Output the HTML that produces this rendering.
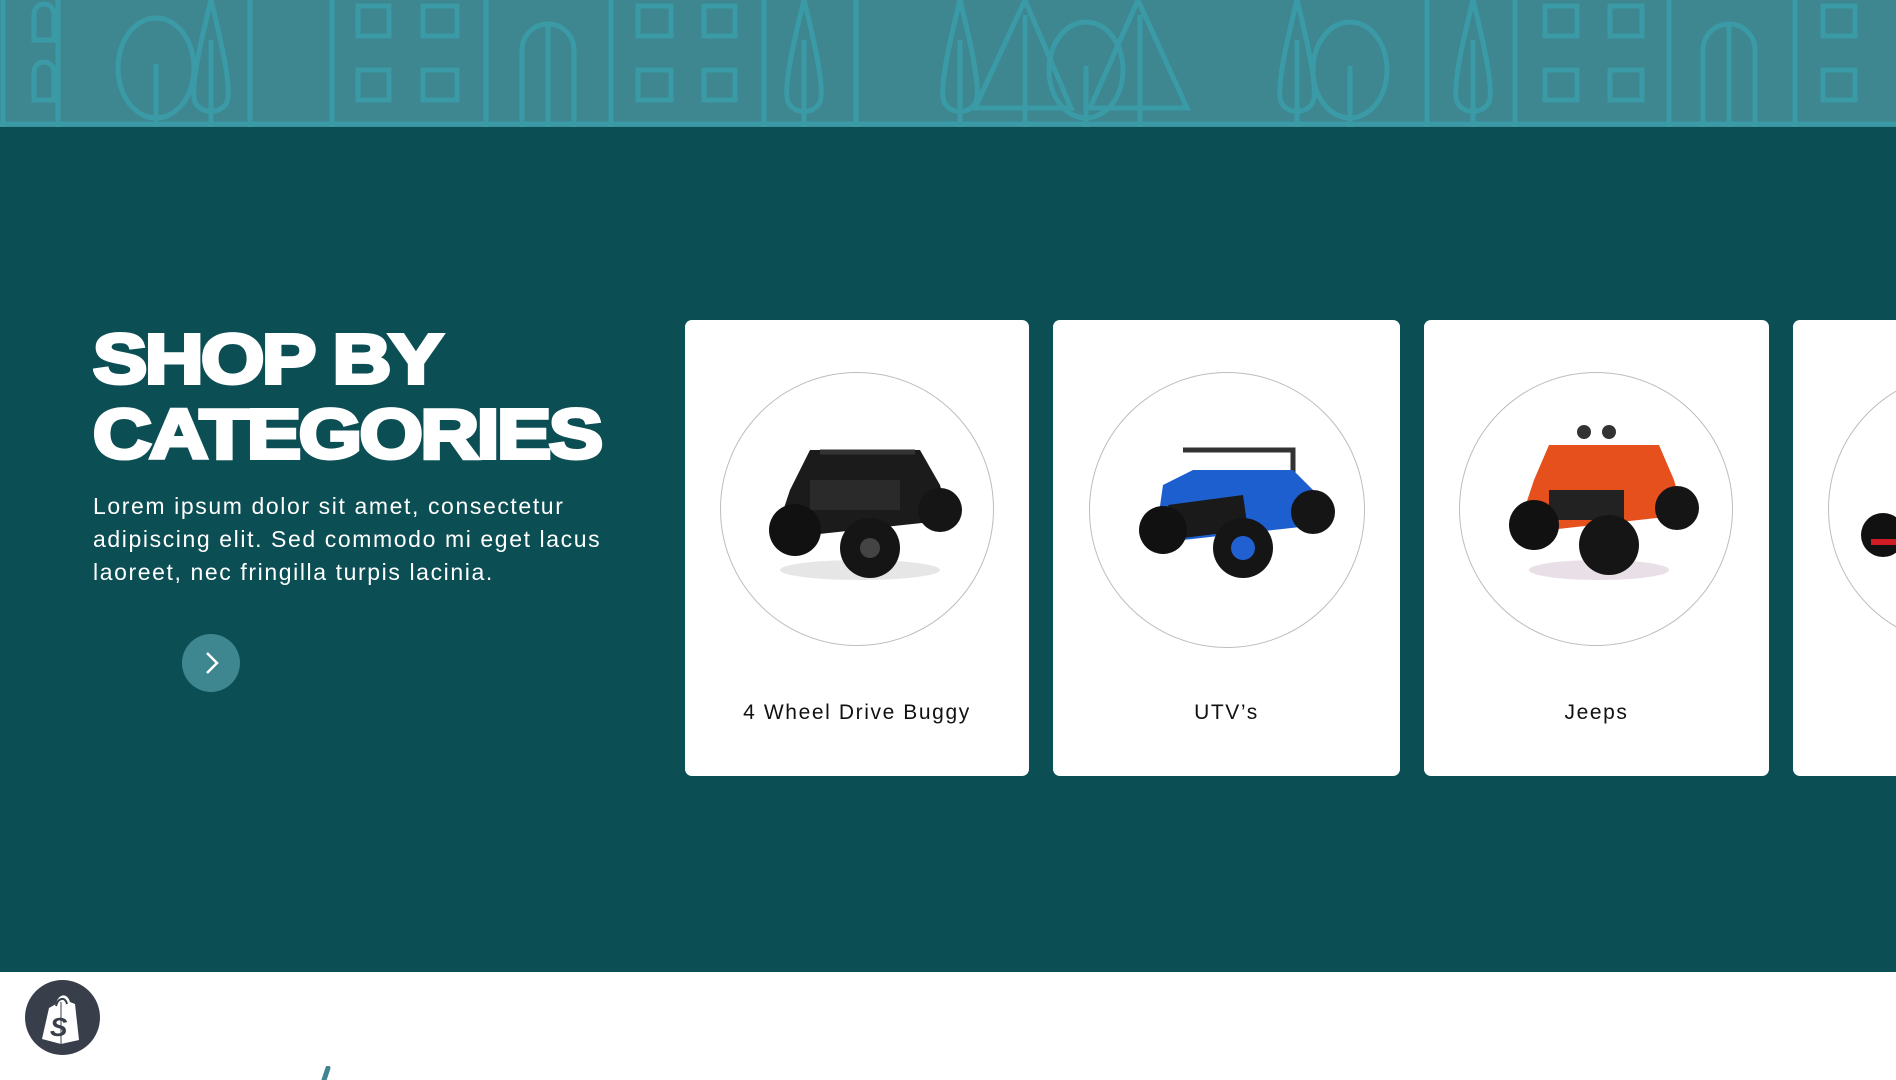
<!DOCTYPE html>
<html><head><meta charset="utf-8"><style>
*{margin:0;padding:0;box-sizing:border-box}
body{width:1896px;height:1080px;overflow:hidden;background:#fff;font-family:"Liberation Sans",sans-serif;position:relative}
.banner{position:absolute;left:0;top:0;width:1896px;height:127px;background:#3e8690}
.dark{position:absolute;left:0;top:127px;width:1896px;height:845px;background:#0b4e54}
h1{position:absolute;left:93px;top:322px;color:#fff;font-family:"Liberation Sans",sans-serif;font-weight:900;font-size:70px;line-height:75px;letter-spacing:-2px;-webkit-text-stroke:4px #fff;transform:scaleX(1.16);transform-origin:left top;white-space:nowrap}
p.desc{position:absolute;left:93px;top:490px;width:700px;color:#fff;font-size:23px;line-height:33px;letter-spacing:1.6px}
.btn{position:absolute;left:182px;top:634px;width:58px;height:58px;border-radius:50%;background:#3e8690}
.card{position:absolute;top:320px;height:456px;background:#fff;border-radius:7px;overflow:hidden}
.circ{position:absolute;top:52px;width:274px;height:274px;border-radius:50%;border:1px solid #bdbdbd}
.lbl{position:absolute;left:0;right:0;text-align:center;font-size:21px;letter-spacing:1.6px;color:#111}
.car{position:absolute}
.shop{position:absolute;left:25px;top:980px;width:75px;height:75px;border-radius:50%;background:#383f4a}
</style></head><body>
<div class="banner">
<svg width="1896" height="127" viewBox="0 0 1896 127" fill="none" stroke="#3a9ba7" stroke-width="5">
<path d="M0 124H1896"/>
<path d="M3 0V127M58 0V127M250 0V127M332 0V127M486 0V127M611 0V127M764 0V127M856 0V127M1427 0V127M1515 0V127M1669 0V127M1795 0V127"/>
<path d="M34 40V14a10 10 0 0 1 20 0V40ZM34 100V72a10 10 0 0 1 20 0V100Z"/>
<path d="M358 6h31v30h-31zM423 6h34v30h-34zM358 70h31v30h-31zM423 70h34v30h-34z"/>
<path d="M638 6h33v30h-33zM704 6h31v30h-31zM638 70h33v30h-33zM704 70h31v30h-31z"/>
<path d="M1545 6h32v30h-32zM1610 6h32v30h-32zM1545 70h32v30h-32zM1610 70h32v30h-32z"/>
<path d="M1823 6h32v30h-32zM1823 70h32v30h-32z"/>
<path d="M522 127V50a26 26 0 0 1 52 0V127M548 25V127"/>
<path d="M1703 127V50a26 26 0 0 1 52 0V127M1729 25V127"/>
<ellipse cx="156" cy="68" rx="38" ry="50"/><path d="M156 64V127"/>
<path d="M211 0C196 60 190 95 196 104C204 114 218 114 226 104C232 95 226 60 211 0ZM211 40V127"/>
<path d="M804 0C789 60 783 95 789 104C797 114 811 114 819 104C825 95 819 60 804 0ZM804 40V127"/>
<path d="M960 0C945 60 939 95 945 104C953 114 967 114 975 104C981 95 975 60 960 0ZM960 40V127"/>
<ellipse cx="1086" cy="70" rx="37" ry="48"/><path d="M1086 66V127"/>
<path d="M1025 0L975 108H1071ZM1025 15V127"/>
<path d="M1138 0L1090 108H1187ZM1140 15V127"/>
<ellipse cx="1350" cy="70" rx="37" ry="48"/><path d="M1350 66V127"/>
<path d="M1297 0C1282 60 1276 95 1282 104C1290 114 1304 114 1312 104C1318 95 1312 60 1297 0ZM1297 40V127"/>
<path d="M1473 0C1458 60 1452 95 1458 104C1466 114 1480 114 1488 104C1494 95 1488 60 1473 0ZM1473 40V127"/>
</svg>
</div>
<div class="dark"></div>
<h1>SHOP BY<br>CATEGORIES</h1>
<p class="desc">Lorem ipsum dolor sit amet, consectetur<br>adipiscing elit. Sed commodo mi eget lacus<br>laoreet, nec fringilla turpis lacinia.</p>
<div class="btn"><svg width="58" height="58" viewBox="0 0 58 58" fill="none" stroke="#fff" stroke-width="2.5"><path d="M25 19L35 29L25 39"/></svg></div>

<div class="card" style="left:685px;width:344px">
<div class="circ" style="left:35px"></div>
<svg class="car" style="left:65px;top:110px" width="214" height="160" viewBox="0 0 214 160">
<ellipse cx="110" cy="140" rx="80" ry="10" fill="#e6e6e6"/>
<path d="M40 60L60 20H170L190 55L200 90L60 105L30 90Z" fill="#1b1b1b"/>
<path d="M70 22H165" stroke="#333" stroke-width="5"/>
<rect x="60" y="50" width="90" height="30" fill="#2a2a2a"/>
<circle cx="45" cy="100" r="26" fill="#111"/><circle cx="120" cy="118" r="30" fill="#151515"/><circle cx="190" cy="80" r="22" fill="#151515"/><circle cx="120" cy="118" r="10" fill="#444"/>
</svg>
<div class="lbl" style="top:381px">4 Wheel Drive Buggy</div>
</div>

<div class="card" style="left:1053px;width:347px">
<div class="circ" style="left:36px;width:276px;height:276px"></div>
<svg class="car" style="left:70px;top:110px" width="214" height="160" viewBox="0 0 214 160">
<path d="M60 20H170V60" stroke="#333" stroke-width="5" fill="none"/>
<path d="M40 55L70 40H170L190 60L195 95L60 110L35 90Z" fill="#1e5fd0"/>
<path d="M45 75L120 65L125 100L60 108Z" fill="#1a1a1a"/>
<circle cx="40" cy="100" r="24" fill="#111"/><circle cx="120" cy="118" r="30" fill="#151515"/><circle cx="190" cy="82" r="22" fill="#151515"/><circle cx="120" cy="118" r="12" fill="#2060d0"/>
</svg>
<div class="lbl" style="top:381px">UTV’s</div>
</div>

<div class="card" style="left:1424px;width:345px">
<div class="circ" style="left:35px"></div>
<svg class="car" style="left:65px;top:100px" width="214" height="170" viewBox="0 0 214 170">
<ellipse cx="110" cy="150" rx="70" ry="10" fill="#e8e0e6"/>
<circle cx="95" cy="12" r="7" fill="#333"/><circle cx="120" cy="12" r="7" fill="#333"/>
<path d="M45 60L60 25H170L185 60L195 95L60 110L35 90Z" fill="#e5501c"/>
<rect x="60" y="70" width="75" height="30" fill="#222"/>
<circle cx="45" cy="105" r="25" fill="#111"/><circle cx="120" cy="125" r="30" fill="#151515"/><circle cx="188" cy="88" r="22" fill="#151515"/>
</svg>
<div class="lbl" style="top:381px">Jeeps</div>
</div>

<div class="card" style="left:1793px;width:140px">
<div class="circ" style="left:35px"></div>
<svg class="car" style="left:68px;top:185px" width="40" height="60" viewBox="0 0 40 60"><circle cx="22" cy="30" r="22" fill="#111"/><rect x="10" y="34" width="30" height="6" fill="#d01c24"/></svg>
</div>

<div class="shop"><svg width="75" height="75" viewBox="0 0 75 75"><path d="M24 28L31 24C33 14 42 12 45 22L50 24L54 60L36 64L17 59Z" fill="#fff"/><path d="M31 26C33 18 40 16 42 24" stroke="#383f4a" stroke-width="2" fill="none"/><text x="25" y="56" font-family="Liberation Sans" font-weight="bold" font-style="italic" font-size="26" fill="#383f4a">S</text><path d="M36 22V64" stroke="#383f4a" stroke-width="1"/></svg></div>
<svg style="position:absolute;left:318px;top:1066px" width="20" height="14"><path d="M6 14L10 2" stroke="#3e8690" stroke-width="5" stroke-linecap="round"/></svg>
</body></html>
